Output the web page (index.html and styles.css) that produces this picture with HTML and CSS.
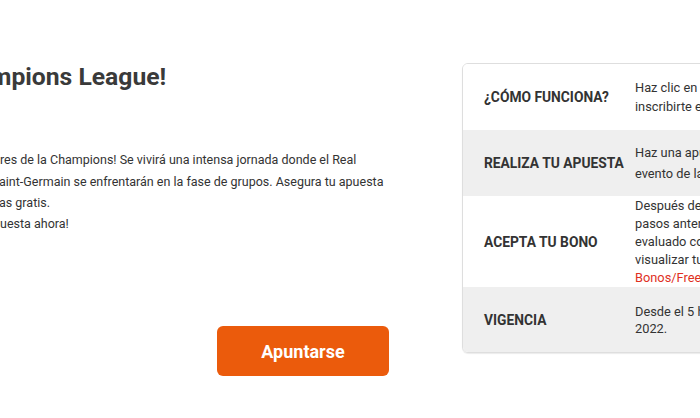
FILE: index.html
```html
<!DOCTYPE html>
<html lang="es">
<head>
<meta charset="utf-8">
<title>Champions League</title>
<link rel="stylesheet" href="styles.css">
</head>
<body>
<div class="page">
  <section class="promo">
    <h1 class="title">mpions League!</h1>
    <p class="intro"><span class="line">res de la Champions! Se vivirá una intensa jornada donde el Real</span></p>
    <p class="body-text">
      <span class="line cut">aint-Germain se enfrentarán en la fase de grupos. Asegura tu apuesta</span>
      <span class="line cut">as gratis.</span>
      <span class="line">uesta ahora!</span>
    </p>
    <a class="cta" href="#">Apuntarse</a>
  </section>
  <aside class="steps">
    <div class="row row-a">
      <div class="label">¿CÓMO FUNCIONA?</div>
      <div class="value">
        <span class="line">Haz clic en el botón Apuntarse para</span>
        <span class="line">inscribirte en la promoción.</span>
      </div>
    </div>
    <div class="row row-b alt">
      <div class="label">REALIZA TU APUESTA</div>
      <div class="value">
        <span class="line">Haz una apuesta de 10 € o más en un</span>
        <span class="line">evento de la Champions League.</span>
      </div>
    </div>
    <div class="row row-c">
      <div class="label">ACEPTA TU BONO</div>
      <div class="value">
        <span class="line">Después de cumplir con los</span>
        <span class="line">pasos anteriores y que tu apuesta sea</span>
        <span class="line">evaluado correctamente, podrás</span>
        <span class="line">visualizar tu bono en la sección</span>
        <span class="line link">Bonos/Freebets.</span>
      </div>
    </div>
    <div class="row row-d alt">
      <div class="label">VIGENCIA</div>
      <div class="value">
        <span class="line">Desde el 5 hasta el 6 de octubre de</span>
        <span class="line">2022.</span>
      </div>
    </div>
  </aside>
</div>
</body>
</html>
```
FILE: styles.css
```css
* { box-sizing: border-box; }
html, body {
  margin: 0;
  padding: 0;
  background: #fff;
}
body {
  font-family: Roboto, "Liberation Sans", Arial, sans-serif;
  color: #333;
  width: 700px;
  height: 418px;
  overflow: hidden;
}
.page {
  display: flex;
  width: 700px;
  height: 418px;
  overflow: hidden;
}
.promo {
  flex: none;
  width: 462px;
  display: flex;
  flex-direction: column;
  align-items: flex-start;
}
.line {
  display: block;
  white-space: nowrap;
}
.title {
  margin: 63px 0 0 -10px;
  font-size: 24.7px;
  line-height: 28px;
  font-weight: 700;
  color: #3a3a3a;
  white-space: nowrap;
}
.intro {
  margin: 58.5px 0 0 0;
  font-size: 12.5px;
  line-height: 20px;
  color: #333;
}
.body-text {
  margin: 2.7px 0 0 0;
  font-size: 12.5px;
  line-height: 20.75px;
  color: #333;
}
.cut { margin-left: -1px; }
.cta {
  margin: 92px 0 0 217px;
  width: 172px;
  height: 50px;
  border-radius: 6px;
  background: #eb5b0c;
  color: #fff;
  font-size: 18px;
  font-weight: 700;
  text-decoration: none;
  display: flex;
  align-items: center;
  justify-content: center;
}
.steps {
  flex: none;
  width: 420px;
  margin-top: 63px;
  align-self: flex-start;
  border: 1px solid #dedede;
  border-radius: 6px;
  overflow: hidden;
  box-shadow: 0 1px 1px rgba(0,0,0,0.08);
}
.row {
  display: grid;
  grid-template-columns: 162px 1fr;
  align-items: center;
  background: #fff;
}
.row.alt { background: #efefef; }
.row-a { height: 66px; }
.row-b { height: 66px; }
.row-c { height: 91px; }
.row-d { height: 65px; }
.label {
  padding-left: 21px;
  font-size: 13.8px;
  font-weight: 700;
  color: #333;
  white-space: nowrap;
}
.value {
  padding-left: 10px;
  font-size: 12.8px;
  line-height: 18px;
  color: #333;
}
.row-a .value { line-height: 19px; }
.row-b .value { line-height: 21px; }
.row-d .value { line-height: 17px; }
.link { color: #e0301e; }
```
